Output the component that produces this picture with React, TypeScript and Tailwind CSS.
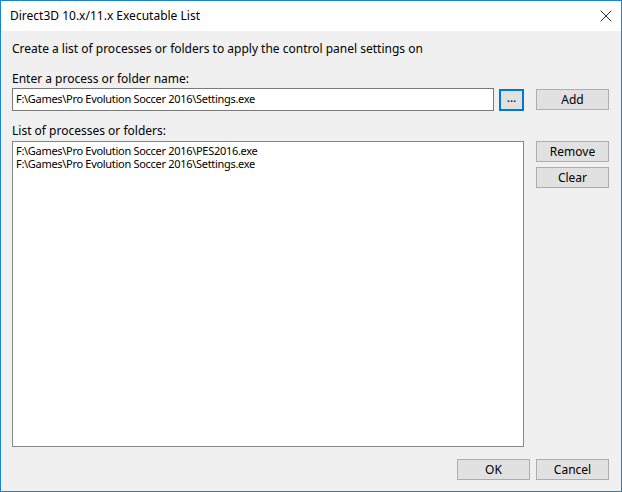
import { X } from 'lucide-react';

const font = { fontFamily: '"Noto Sans", "Open Sans", sans-serif' };

const Btn = ({ label }: { label: string }) => (
  <button className="h-[21px] w-[73px] bg-[#e1e1e1] border border-[#adadad] text-[12px] leading-none text-black">
    {label}
  </button>
);

const items = [
  'F:\\Games\\Pro Evolution Soccer 2016\\PES2016.exe',
  'F:\\Games\\Pro Evolution Soccer 2016\\Settings.exe',
];

export default function App() {
  return (
    <div
      className="w-[622px] h-[492px] border border-[#1883d7] bg-[#f0f0f0] flex flex-col text-[12px] text-black overflow-hidden"
      style={font}
    >
      {/* title bar */}
      <div className="h-[30px] bg-white flex items-center justify-between pl-[9px] pr-[5px] shrink-0">
        <span className="text-[12px]">Direct3D 10.x/11.x Executable List</span>
        <X size={20} strokeWidth={1} className="text-black" />
      </div>

      <div className="flex-1 flex flex-col pl-[11px] pr-[12px]">
        <div className="mt-[10px] h-[16px] leading-[16px]">
          Create a list of processes or folders to apply the control panel settings on
        </div>

        <div className="mt-[14px] h-[16px] leading-[16px]">Enter a process or folder name:</div>

        <div className="mt-[1px] flex items-center">
          <div className="w-[482px] h-[23px] bg-white border border-[#7a7a7a] flex items-center pl-[3px] text-[11px] tracking-[-0.3px]">
            F:\Games\Pro Evolution Soccer 2016\Settings.exe
          </div>
          <button className="ml-[5px] w-[25px] h-[22px] bg-[#e1e1e1] border-2 border-[#0078d7] text-[12px] leading-none pb-[4px]">
            ...
          </button>
          <div className="ml-[12px]">
            <Btn label="Add" />
          </div>
        </div>

        <div className="mt-[12px] h-[16px] leading-[16px]">List of processes or folders:</div>

        <div className="mt-[2px] flex items-start">
          <div className="w-[512px] h-[306px] bg-white border border-[#828790] pl-[3px] pt-[2px] text-[11px] tracking-[-0.3px]">
            {items.map((t) => (
              <div key={t} className="h-[13px] leading-[13px] whitespace-nowrap">
                {t}
              </div>
            ))}
          </div>
          <div className="ml-[12px] flex flex-col gap-[5px]">
            <Btn label="Remove" />
            <Btn label="Clear" />
          </div>
        </div>

        <div className="mt-[12px] flex justify-end gap-[6px]">
          <Btn label="OK" />
          <Btn label="Cancel" />
        </div>
      </div>
    </div>
  );
}
